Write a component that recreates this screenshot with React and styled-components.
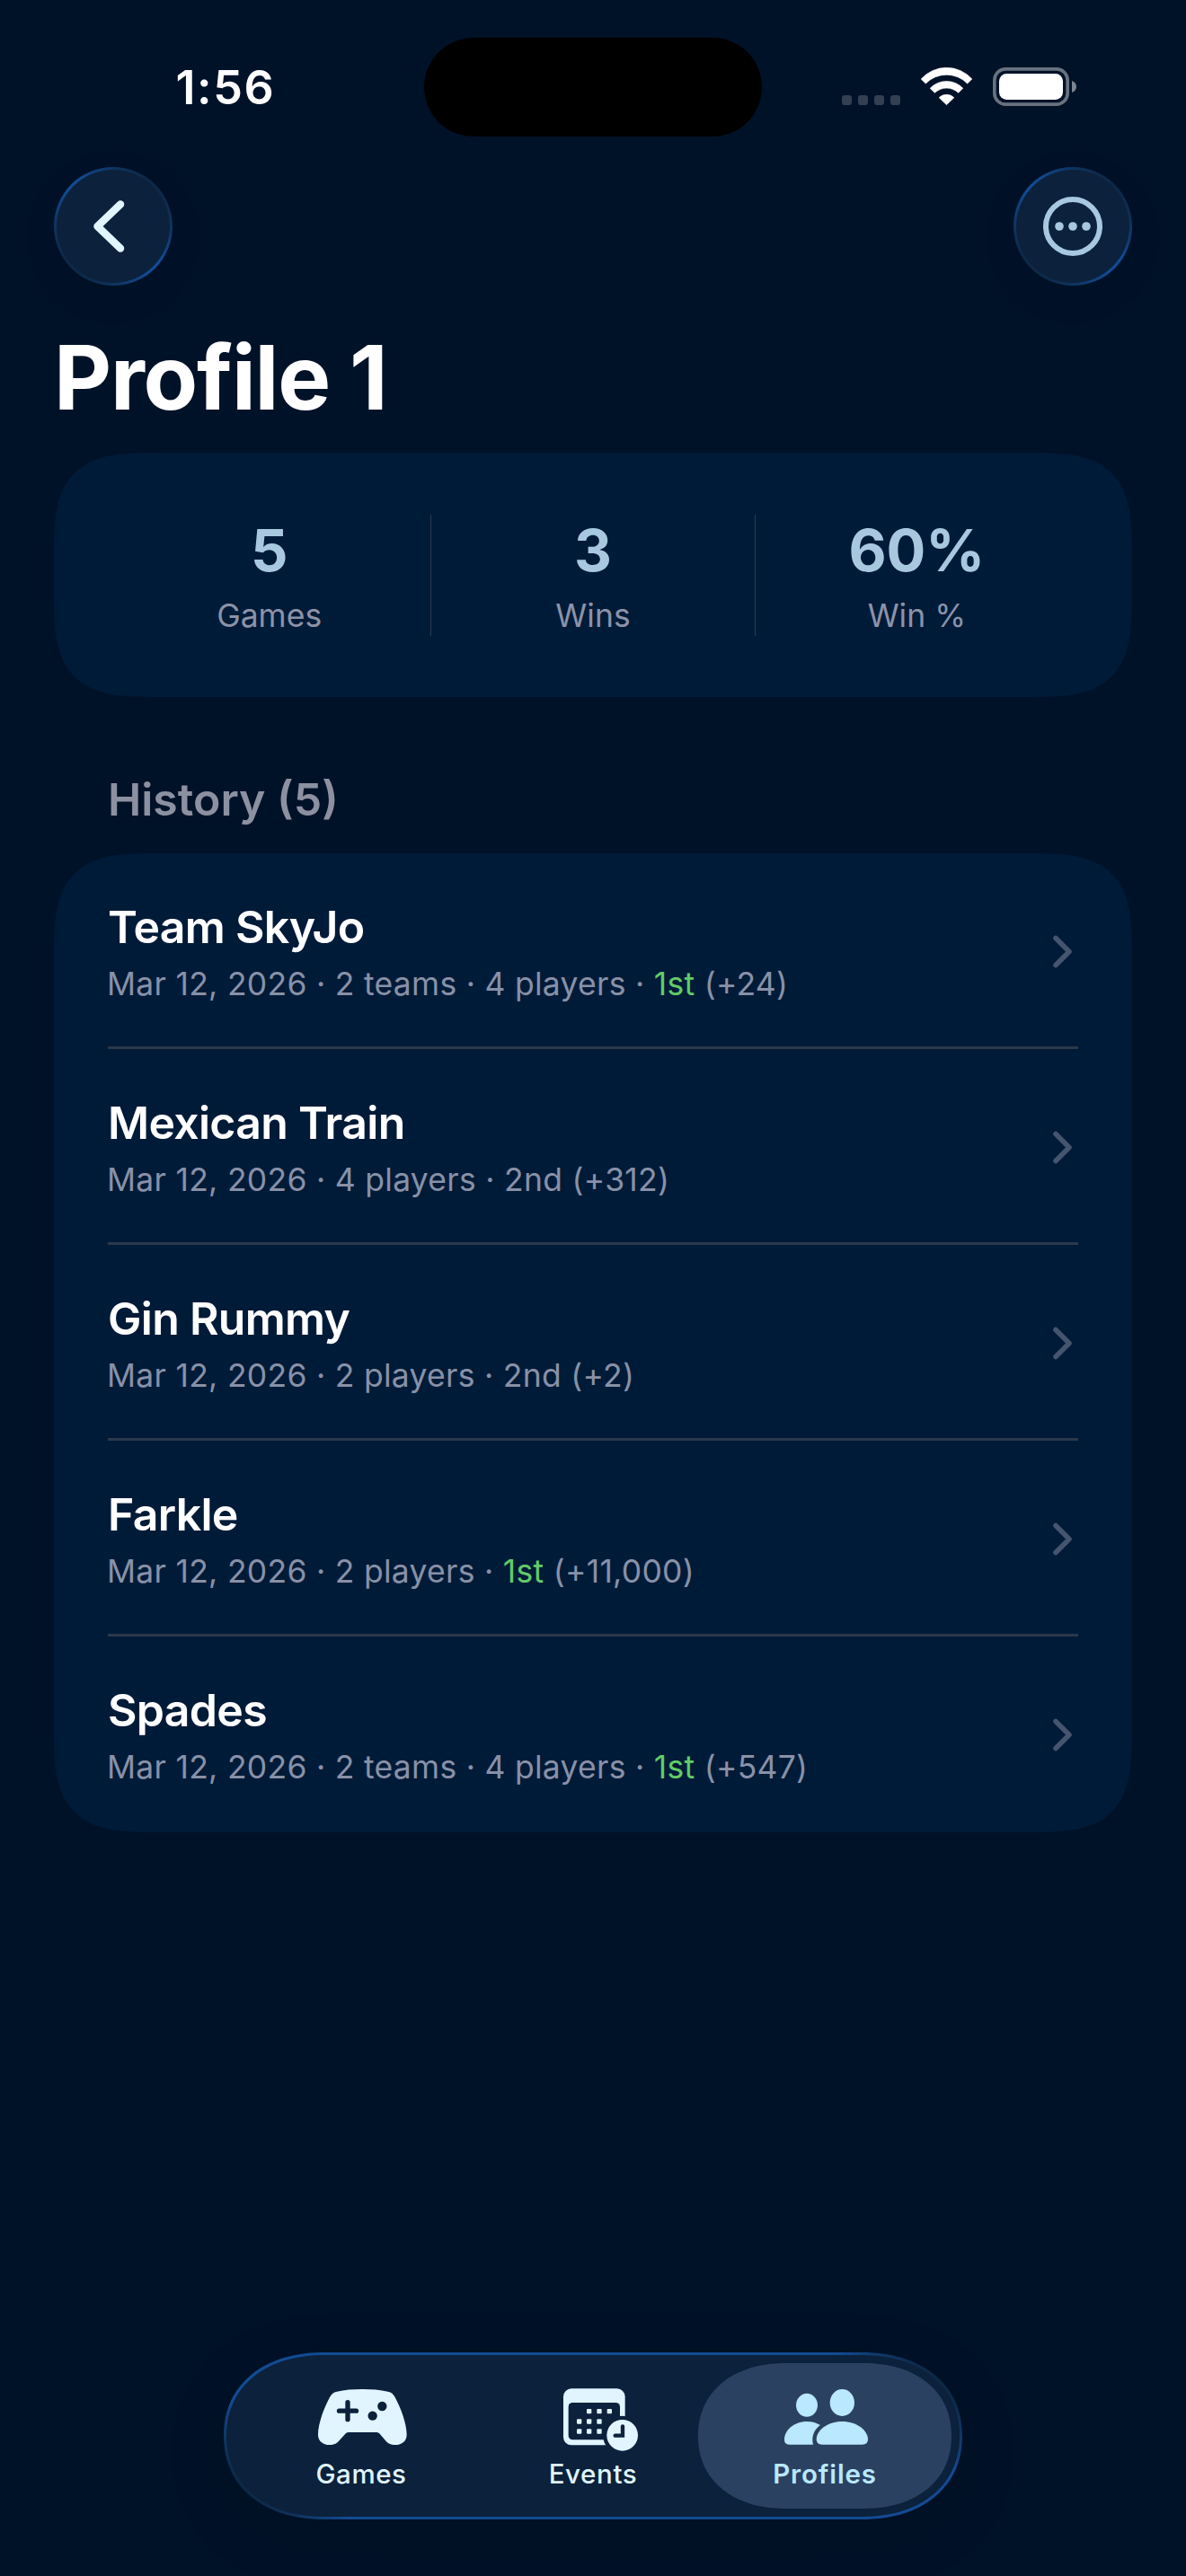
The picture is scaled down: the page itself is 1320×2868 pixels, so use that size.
import React from "react";
import styled, { createGlobalStyle } from "styled-components";

const GlobalStyle = createGlobalStyle`
  *, *::before, *::after { box-sizing: border-box; }
  body {
    margin: 0;
    background: #001228;
    color: #fff;
    font-family: Inter, "Liberation Sans", sans-serif;
    -webkit-font-smoothing: antialiased;
  }
  svg { display: block; flex: none; }
`;

const Screen = styled.div`
  width: 1320px;
  height: 2868px;
  display: flex;
  flex-direction: column;
  background: #001228;
  overflow: hidden;
`;

/* ---------- Status bar ---------- */

const StatusBar = styled.div`
  height: 186px;
  padding-top: 42px;
  display: grid;
  grid-template-columns: 1fr 376px 1fr;
  align-items: start;
`;

const Time = styled.div`
  margin: 25px 0 0 30px;
  text-align: center;
  font-size: 52px;
  font-weight: 600;
  line-height: 62px;
  letter-spacing: 1.6px;
`;

const Island = styled.div`
  height: 110px;
  border-radius: 55px;
  background: #000;
`;

const StatusIcons = styled.div`
  display: flex;
  gap: 22px;
  padding: 33px 0 0 89px;
`;

/* ---------- Navigation ---------- */

const NavBar = styled.div`
  display: flex;
  justify-content: space-between;
  padding: 0 60px;
`;

const RoundButton = styled.button`
  width: 132px;
  height: 132px;
  padding: 0;
  display: flex;
  align-items: center;
  justify-content: center;
  border: 3px solid transparent;
  border-radius: 50%;
  background:
    linear-gradient(#0b213c, #0b213c) padding-box,
    linear-gradient(45deg, #0d2845 28px, #134b93 84px, #134b93 103px, #0d2845 159px) border-box;
  box-shadow: 0 12px 48px rgba(0, 0, 0, 0.05);
`;

const Title = styled.h1`
  margin: 42px 60px 24px;
  font-size: 99px;
  font-weight: 700;
  line-height: 120px;
  letter-spacing: -1.25px;
`;

/* ---------- Cards ---------- */

const Card = styled.section`
  margin: 0 60px;
  border-radius: 78px;
  background: #001b38;

  @supports (corner-shape: squircle) {
    border-radius: 119px;
    corner-shape: superellipse(1.7);
  }
`;

const StatsCard = styled(Card)`
  height: 272px;
  padding: 69px 60px;
  display: grid;
  grid-template-columns: 1fr 1px 1fr 1px 1fr;
`;

const Divider = styled.div`
  background: #2c3a4e;
`;

const Stat = styled.div`
  padding-top: 1px;
  display: flex;
  flex-direction: column;
  align-items: center;
  gap: 12px;
`;

const StatValue = styled.div`
  font-size: 65px;
  font-weight: 700;
  line-height: 78px;
  letter-spacing: -0.2px;
  color: #a8c8e0;
`;

const StatLabel = styled.div`
  font-size: 35.5px;
  line-height: 44px;
  color: #8c93a8;
`;

const SectionTitle = styled.h2`
  margin: 84px 120px 30px;
  font-size: 50px;
  font-weight: 600;
  line-height: 60px;
  color: #8c91a1;
`;

const Row = styled.div`
  height: 218px;
  margin: 0 60px;
  display: flex;
  justify-content: space-between;
  align-items: flex-start;
  border-bottom: 3px solid #2b394b;

  &:last-child { border-bottom-color: transparent; }
`;

const RowText = styled.div`
  padding-top: 52px;
  display: flex;
  flex-direction: column;
  gap: 12px;
`;

const RowTitle = styled.div`
  font-size: 50px;
  font-weight: 600;
  line-height: 60px;
  letter-spacing: -0.7px;
`;

const RowMeta = styled.div`
  margin-left: -1px;
  font-size: 35.5px;
  line-height: 44px;
  letter-spacing: 0.28px;
  color: #8891a7;
  white-space: nowrap;
`;

const Win = styled.span`
  color: #62cb67;
`;

const Disclosure = styled.svg`
  margin: 91px 6px 0 0;
`;

/* ---------- Tab bar ---------- */

const TabBar = styled.nav`
  align-self: center;
  width: 822px;
  height: 186px;
  margin: auto 0 63px;
  padding: 9px;
  display: flex;
  border: 3px solid transparent;
  border-radius: 93px;
  background:
    linear-gradient(#0b213c, #0b213c) padding-box,
    linear-gradient(45deg, #0d2845 40px, #134b93 100px, #134b93 calc(100% - 100px), #0d2845 calc(100% - 40px)) border-box;
  box-shadow: 0 18px 72px rgba(0, 0, 0, 0.1);

  @supports (corner-shape: squircle) {
    border-radius: 112px / 93px;
    corner-shape: superellipse(1.13);
  }
`;

const Tab = styled.div`
  width: 282px;
  height: 162px;
  padding-top: 25px;
  display: flex;
  flex-direction: column;
  align-items: center;
  border-radius: 81px;
  background: ${(p) => (p.$active ? "#2b4162" : "transparent")};
  color: ${(p) => (p.$active ? "#b9e8ff" : "#e0f5ff")};

  & + & { margin-left: -24px; }

  @supports (corner-shape: squircle) {
    border-radius: 98px / 81px;
    corner-shape: superellipse(1.13);
  }
`;

const TabLabel = styled.div`
  font-size: 29.5px;
  font-weight: ${(p) => (p.$active ? 600 : 500)};
  line-height: 36px;
  letter-spacing: ${(p) => (p.$active ? 0.87 : 0.6)}px;
`;

/* ---------- Icons ---------- */

const SignalIcon = () => (
  <svg width="65" height="43" viewBox="51 45 195 129" fill="#333f53">
    {[51, 105, 159, 213].map((x) => (
      <rect key={x} x={x} y="138" width="33" height="33" rx="10" />
    ))}
  </svg>
);

const WifiIcon = () => (
  <svg width="59" height="43" viewBox="312 45 177 129" fill="#fff" stroke="#fff" strokeWidth="2" strokeLinejoin="round">
    <path d="M315.5 84 A114 114 0 0 1 485.5 84 L470 99 A97 97 0 0 0 331 99 Z" />
    <path d="M345.5 115 A76 76 0 0 1 455.5 115 L440 130 A57 57 0 0 0 361 130 Z" />
    <path d="M375.5 146 A36 36 0 0 1 425.5 146 L400.5 170 Z" />
  </svg>
);

const BatteryIcon = () => (
  <svg width="93" height="43" viewBox="555 45 279 129">
    <rect x="560.5" y="50.5" width="244" height="118" rx="37" fill="none" stroke="#68727f" strokeWidth="11" />
    <rect x="576" y="66" width="213" height="87" rx="25" fill="#fff" />
    <path d="M819 90 C828 93 834 100 834 109.5 C834 119 828 126 819 129 Z" fill="#7b8492" />
  </svg>
);

const BackIcon = () => (
  <svg width="60" height="66" viewBox="0 0 60 66" fill="none" stroke="#e0f5ff" strokeWidth="8.5" strokeLinecap="round" strokeLinejoin="round">
    <path d="M38 8.5 L12.5 33 L38 57.5" />
  </svg>
);

const MoreIcon = () => (
  <svg width="66" height="66" viewBox="0 0 66 66" fill="#a8c8e0">
    <circle cx="33" cy="33" r="30" fill="none" stroke="#a8c8e0" strokeWidth="6" />
    <circle cx="18" cy="33" r="4.8" />
    <circle cx="33" cy="33" r="4.8" />
    <circle cx="48" cy="33" r="4.8" />
  </svg>
);

const ChevronIcon = () => (
  <Disclosure width="23" height="37" viewBox="0 0 23 37" fill="none" stroke="#46556f" strokeWidth="5.5" strokeLinecap="round" strokeLinejoin="round">
    <path d="M4 3.5 L19 18.5 L4 33.5" />
  </Disclosure>
);

const GamesIcon = () => (
  <svg width="110" height="80" viewBox="21 48 330 240">
    <path
      fill="currentColor"
      d="M105 68 C130 62 160 60 190 60 C220 60 250 62 275 68 C287 70 293 76 299 87 C318 122 338 175 338 212 C338 233 322 246 300 246 C284 246 274 240 266 230 L248 209 Q244 204 238 204 L143 204 Q137 204 133 209 L114 230 C106 240 96 246 80 246 C58 246 42 233 42 212 C42 175 62 122 81 87 C87 76 93 70 105 68 Z"
    />
    <path d="M141 104 V161 M112.5 132.5 H169.5" stroke="#0b213c" strokeWidth="16" strokeLinecap="round" />
    <circle cx="256" cy="117" r="15.5" fill="#0b213c" />
    <circle cx="224" cy="149" r="15.5" fill="#0b213c" />
  </svg>
);

const calendarDots = [
  [137, 134], [171, 134], [205, 134],
  [104, 168], [137, 168], [171, 168],
  [104, 201], [137, 201], [171, 201],
];

const EventsIcon = () => (
  <svg width="110" height="80" viewBox="-15 48 330 240">
    <rect x="51" y="58" width="206" height="189" rx="27" fill="currentColor" />
    <rect x="68" y="105" width="172" height="124" rx="14" fill="#0b213c" />
    {calendarDots.map(([x, y]) => (
      <rect key={`${x}-${y}`} x={x - 8} y={y - 8} width="16" height="16" rx="3" fill="currentColor" />
    ))}
    <circle cx="248" cy="214" r="65" fill="#0b213c" />
    <circle cx="248" cy="214" r="52" fill="currentColor" />
    <path d="M249 184 V215 H224" fill="none" stroke="#0b213c" strokeWidth="13" strokeLinecap="round" strokeLinejoin="miter" />
  </svg>
);

const ProfilesIcon = () => (
  <svg width="110" height="80" viewBox="609 168 330 240" fill="currentColor">
    <ellipse cx="714" cy="233.5" rx="36" ry="39" />
    <ellipse cx="832" cy="225" rx="41" ry="45" />
    <path d="M655 365 Q639 365 639 349 C639 318 670 288 714 288 C732 288 747 293 759 300 C740 314 728 336 735 365 Z" />
    <path d="M765 365 Q746 365 746 348 C746 318 782 288 832 288 C882 288 918 318 918 348 Q918 365 899 365 Z" />
  </svg>
);

/* ---------- Data ---------- */

const stats = [
  { value: "5", label: "Games" },
  { value: "3", label: "Wins" },
  { value: "60%", label: "Win %" },
];

const history = [
  { name: "Team SkyJo", info: "Mar 12, 2026 · 2 teams · 4 players", place: "1st", score: "(+24)" },
  { name: "Mexican Train", info: "Mar 12, 2026 · 4 players", place: "2nd", score: "(+312)" },
  { name: "Gin Rummy", info: "Mar 12, 2026 · 2 players", place: "2nd", score: "(+2)" },
  { name: "Farkle", info: "Mar 12, 2026 · 2 players", place: "1st", score: "(+11,000)" },
  { name: "Spades", info: "Mar 12, 2026 · 2 teams · 4 players", place: "1st", score: "(+547)" },
];

const tabs = [
  { label: "Games", Icon: GamesIcon },
  { label: "Events", Icon: EventsIcon },
  { label: "Profiles", Icon: ProfilesIcon, active: true },
];

export default function App() {
  return (
    <Screen>
      <GlobalStyle />
      <StatusBar>
        <Time>1:56</Time>
        <Island />
        <StatusIcons>
          <SignalIcon />
          <WifiIcon />
          <BatteryIcon />
        </StatusIcons>
      </StatusBar>

      <NavBar>
        <RoundButton aria-label="Back"><BackIcon /></RoundButton>
        <RoundButton aria-label="More"><MoreIcon /></RoundButton>
      </NavBar>

      <Title>Profile 1</Title>

      <StatsCard>
        {stats.map((s, i) => (
          <React.Fragment key={s.label}>
            {i > 0 && <Divider />}
            <Stat>
              <StatValue>{s.value}</StatValue>
              <StatLabel>{s.label}</StatLabel>
            </Stat>
          </React.Fragment>
        ))}
      </StatsCard>

      <SectionTitle>History ({history.length})</SectionTitle>

      <Card>
        {history.map((g) => (
          <Row key={g.name}>
            <RowText>
              <RowTitle>{g.name}</RowTitle>
              <RowMeta>
                {g.info} · {g.place === "1st" ? <Win>1st</Win> : g.place} {g.score}
              </RowMeta>
            </RowText>
            <ChevronIcon />
          </Row>
        ))}
      </Card>

      <TabBar>
        {tabs.map(({ label, Icon, active }) => (
          <Tab key={label} $active={active}>
            <Icon />
            <TabLabel $active={active}>{label}</TabLabel>
          </Tab>
        ))}
      </TabBar>
    </Screen>
  );
}
